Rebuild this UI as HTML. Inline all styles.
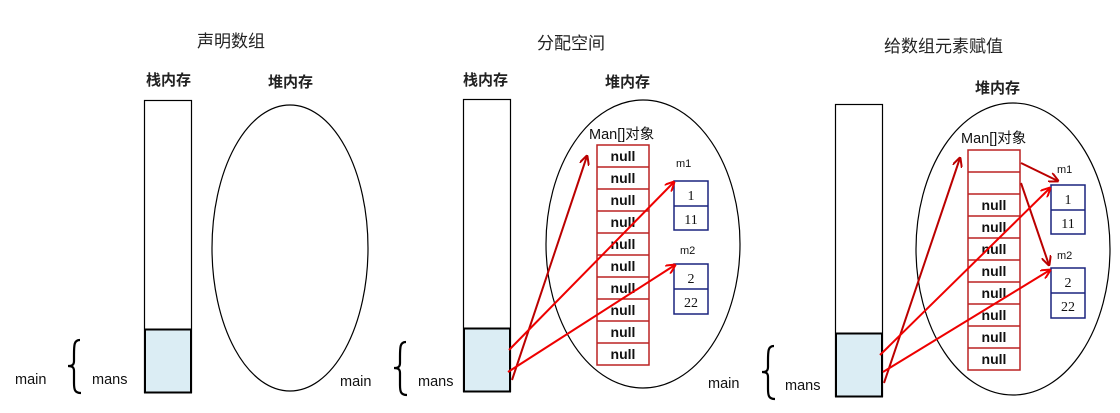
<!DOCTYPE html>
<html><head><meta charset="utf-8"><style>
body{margin:0;background:#fff}
svg text{font-family:"Liberation Sans","Noto Sans CJK SC",sans-serif}
.cn{font-size:17px;fill:#222}
.b{font-weight:bold;font-size:15px}
.s{font-size:14.5px;fill:#111}
.n{font-size:14px;font-weight:bold;fill:#111}
.d{font-family:"Liberation Serif",serif!important;font-size:14px;fill:#111}
.br{fill:none;stroke:#000;stroke-width:2.2}
</style></head><body>
<svg width="1120" height="408" viewBox="0 0 1120 408" xmlns="http://www.w3.org/2000/svg">
<defs>
<marker id="ar" markerWidth="10" markerHeight="10" refX="9" refY="5" orient="auto" markerUnits="userSpaceOnUse"><path d="M0,0 L10,5 L0,10" fill="none" stroke="#e00" stroke-width="2"/></marker>
<marker id="ad" markerWidth="10" markerHeight="10" refX="9" refY="5" orient="auto" markerUnits="userSpaceOnUse"><path d="M0,0 L10,5 L0,10" fill="none" stroke="#b00" stroke-width="2"/></marker>
</defs>
<!-- panel 1 -->
<text x="197" y="47" class="cn">声明数组</text>
<text x="146" y="85" class="cn b">栈内存</text>
<text x="268" y="87" class="cn b">堆内存</text>
<rect x="144.5" y="100.5" width="47" height="292" fill="#fff" stroke="#000" stroke-width="1.2"/>
<rect x="145" y="329.5" width="46" height="63" fill="#dbedf4" stroke="#000" stroke-width="2"/>
<ellipse cx="290" cy="248" rx="78" ry="143" fill="none" stroke="#000" stroke-width="1.2"/>
<text x="15" y="384" class="s">main</text>
<path class="br" d="M80,340 C74,340 74,345 74,355 L74,361 C74,365 72,366 68,366 C72,366 74,367 74,371 L74,383 C74,390 75,393 81,393"/>
<text x="92" y="384" class="s">mans</text>
<text x="340" y="386" class="s">main</text>
<!-- panel 2 -->
<text x="537" y="49" class="cn">分配空间</text>
<text x="463" y="85" class="cn b">栈内存</text>
<text x="605" y="87" class="cn b">堆内存</text>
<rect x="463.5" y="99.5" width="47" height="292" fill="#fff" stroke="#000" stroke-width="1.2"/>
<rect x="464" y="328.5" width="46" height="63" fill="#dbedf4" stroke="#000" stroke-width="2"/>
<ellipse cx="643" cy="244" rx="97" ry="144" fill="none" stroke="#000" stroke-width="1.2"/>
<text x="589" y="139" font-size="14.5" fill="#111">Man[]对象</text>
<g stroke="#b22" stroke-width="1.5" fill="#fff">
<rect x="597" y="145" width="52" height="220"/>
<path d="M597,167H649M597,189H649M597,211H649M597,233H649M597,255H649M597,277H649M597,299H649M597,321H649M597,343H649"/>
</g>
<g text-anchor="middle">
<text x="623" y="161" class="n">null</text><text x="623" y="183" class="n">null</text><text x="623" y="205" class="n">null</text><text x="623" y="227" class="n">null</text><text x="623" y="249" class="n">null</text><text x="623" y="271" class="n">null</text><text x="623" y="293" class="n">null</text><text x="623" y="315" class="n">null</text><text x="623" y="337" class="n">null</text><text x="623" y="359" class="n">null</text>
</g>
<text x="676" y="167" font-size="11" fill="#111">m1</text>
<text x="680" y="254" font-size="11" fill="#111">m2</text>
<g stroke="#1a237e" stroke-width="1.5" fill="#fff">
<rect x="674" y="181" width="34" height="49"/><path d="M674,206H708"/>
<rect x="674" y="264" width="34" height="50"/><path d="M674,289H708"/>
</g>
<g text-anchor="middle"><text x="691" y="200" class="d">1</text><text x="691" y="224" class="d">11</text><text x="691" y="283" class="d">2</text><text x="691" y="307" class="d">22</text></g>
<line x1="512" y1="380" x2="587" y2="156" stroke="#b00" stroke-width="2" marker-end="url(#ad)"/>
<line x1="509" y1="350" x2="674" y2="182" stroke="#e00" stroke-width="2" marker-end="url(#ar)"/>
<line x1="508" y1="372" x2="675" y2="265" stroke="#e00" stroke-width="2" marker-end="url(#ar)"/>
<path class="br" d="M406,342 C400,342 400,347 400,357 L400,363 C400,367 398,368 394,368 C398,368 400,369 400,373 L400,385 C400,392 401,395 407,395"/>
<text x="418" y="386" class="s">mans</text>
<text x="708" y="388" class="s">main</text>
<!-- panel 3 -->
<text x="884" y="52" class="cn">给数组元素赋值</text>
<text x="975" y="93" class="cn b">堆内存</text>
<rect x="835.5" y="104.5" width="47" height="292" fill="#fff" stroke="#000" stroke-width="1.2"/>
<rect x="836" y="333.5" width="46" height="63" fill="#dbedf4" stroke="#000" stroke-width="2"/>
<ellipse cx="1013" cy="249" rx="97" ry="146" fill="none" stroke="#000" stroke-width="1.2"/>
<text x="961" y="143" font-size="14.5" fill="#111">Man[]对象</text>
<g stroke="#b22" stroke-width="1.5" fill="#fff">
<rect x="968" y="150" width="52" height="220"/>
<path d="M968,172H1020M968,194H1020M968,216H1020M968,238H1020M968,260H1020M968,282H1020M968,304H1020M968,326H1020M968,348H1020"/>
</g>
<g text-anchor="middle">
<text x="994" y="210" class="n">null</text><text x="994" y="232" class="n">null</text><text x="994" y="254" class="n">null</text><text x="994" y="276" class="n">null</text><text x="994" y="298" class="n">null</text><text x="994" y="320" class="n">null</text><text x="994" y="342" class="n">null</text><text x="994" y="364" class="n">null</text>
</g>
<text x="1057" y="173" font-size="11" fill="#111">m1</text>
<text x="1057" y="259" font-size="11" fill="#111">m2</text>
<g stroke="#1a237e" stroke-width="1.5" fill="#fff">
<rect x="1051" y="185" width="34" height="49"/><path d="M1051,210H1085"/>
<rect x="1051" y="268" width="34" height="50"/><path d="M1051,293H1085"/>
</g>
<g text-anchor="middle"><text x="1068" y="204" class="d">1</text><text x="1068" y="228" class="d">11</text><text x="1068" y="287" class="d">2</text><text x="1068" y="311" class="d">22</text></g>
<line x1="1021" y1="163" x2="1058" y2="181" stroke="#b00" stroke-width="2" marker-end="url(#ad)"/>
<line x1="1021" y1="183" x2="1049" y2="265" stroke="#b00" stroke-width="2" marker-end="url(#ad)"/>
<line x1="884" y1="383" x2="960" y2="158" stroke="#b00" stroke-width="2" marker-end="url(#ad)"/>
<line x1="880" y1="355" x2="1050" y2="188" stroke="#e00" stroke-width="2" marker-end="url(#ar)"/>
<line x1="883" y1="372" x2="1050" y2="270" stroke="#e00" stroke-width="2" marker-end="url(#ar)"/>
<path class="br" d="M774,346 C768,346 768,351 768,361 L768,367 C768,371 766,372 762,372 C766,372 768,373 768,377 L768,389 C768,396 769,399 775,399"/>
<text x="785" y="390" class="s">mans</text>
</svg>
</body></html>
